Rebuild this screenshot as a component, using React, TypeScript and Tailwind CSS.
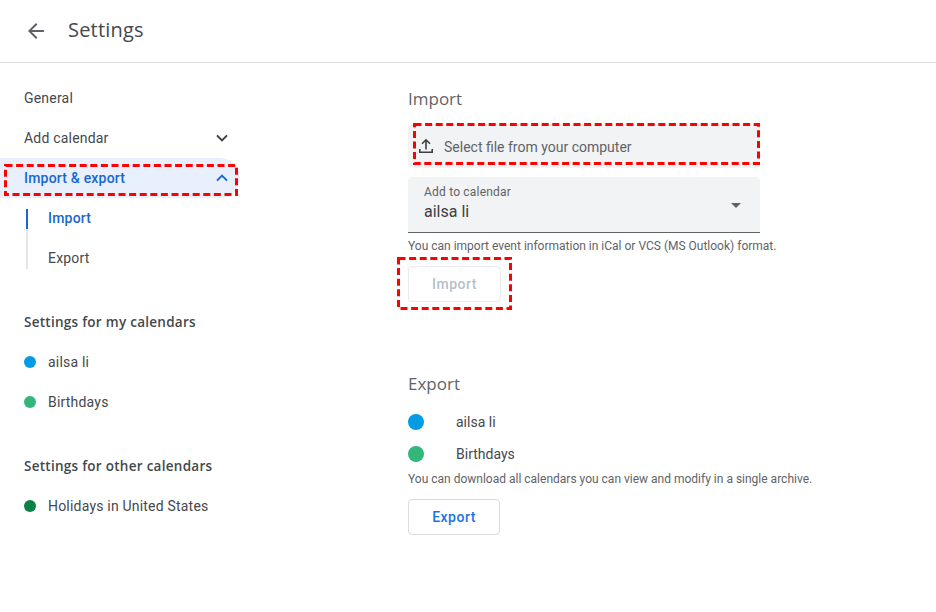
import React from "react";

const F = { fontFamily: "Roboto, sans-serif" };
const T = { fontFamily: "'Open Sans', sans-serif" };

function Row({ children, active }: { children: React.ReactNode; active?: boolean }) {
  return (
    <div className={`h-10 flex items-center pl-6 pr-[6px] text-sm tracking-[0.2px] rounded-r-[20px] ${active ? "bg-[#e8f0fe] text-[#1967d2] font-medium" : "text-[#45484c]"}`}>
      {children}
    </div>
  );
}

function Chevron({ up, color }: { up?: boolean; color: string }) {
  return (
    <svg className="ml-auto" width="24" height="24" viewBox="0 0 24 24" fill="none" stroke={color} strokeWidth="2">
      {up ? <path d="M7 14.6l5-5 5 5" /> : <path d="M7 9.4l5 5 5-5" />}
    </svg>
  );
}

function CalRow({ name, color }: { name: string; color: string }) {
  return (
    <Row>
      <span className="w-3 h-3 rounded-full mr-3" style={{ backgroundColor: color }} />
      {name}
    </Row>
  );
}

function Heading({ children }: { children: React.ReactNode }) {
  return (
    <div className="h-10 flex items-center pl-6 text-[13.5px] font-semibold tracking-[0.27px] text-[#45484c]" style={T}>
      {children}
    </div>
  );
}

function ExportCal({ name, color }: { name: string; color: string }) {
  return (
    <div className="h-8 flex items-center text-sm text-[#45484c]">
      <span className="w-4 h-4 rounded-full mr-8" style={{ backgroundColor: color }} />
      {name}
    </div>
  );
}

function Dash({ x, y, w, h }: { x: number; y: number; w: number; h: number }) {
  return <rect x={x} y={y} width={w} height={h} fill="none" stroke="#ff0000" strokeWidth="3" strokeDasharray="7 3.6" />;
}

export default function App() {
  return (
    <div className="relative w-[936px] h-[612px] bg-white overflow-hidden" style={F}>
      <header className="h-[63px] border-b border-[#dadce0] flex items-center pl-6">
        <svg width="24" height="24" viewBox="0 0 24 24" fill="#5f6368">
          <path d="M20 11H7.83l5.59-5.59L12 4l-8 8 8 8 1.41-1.41L7.83 13H20v-2z" />
        </svg>
        <span className="ml-5 mb-[2px] text-[20px] tracking-[0.2px] text-[#45484c]" style={T}>Settings</span>
      </header>
      <div className="flex">
        <nav className="w-[240px] pt-[15px] shrink-0">
          <Row>General</Row>
          <Row>Add calendar<Chevron color="#3c4043" /></Row>
          <Row active>Import &amp; export<Chevron up color="#1967d2" /></Row>
          <div className="flex ml-[26px]">
            <div className="w-[2px] mt-[11px] h-[60px] bg-[#e3e5e8]">
              <div className="h-5 bg-[#1967d2]" />
            </div>
            <div className="pl-5 text-sm tracking-[0.2px]">
              <div className="h-10 flex items-center font-medium text-[#1967d2]">Import</div>
              <div className="h-10 flex items-center text-[#45484c]">Export</div>
            </div>
          </div>
          <div className="mt-6">
            <Heading>Settings for my calendars</Heading>
            <CalRow name="ailsa li" color="#039be5" />
            <CalRow name="Birthdays" color="#33b679" />
          </div>
          <div className="mt-6">
            <Heading>Settings for other calendars</Heading>
            <CalRow name="Holidays in United States" color="#0b8043" />
          </div>
        </nav>
        <main className="ml-[168px] w-[352px] pt-6">
          <h2 className="h-6 leading-6 text-[17px] text-[#5f6368]" style={T}>Import</h2>
          <div className="mt-[13px] h-[44px] bg-[#f1f3f4] rounded flex items-center pl-2 text-sm text-[#3c4043]">
            <svg width="20" height="20" viewBox="0 0 20 20" fill="none" stroke="#3c4043" strokeWidth="1.6">
              <path d="M10 13.5V4.2M6 7.8l4-4 4 4" />
              <path d="M3.8 13v3.2h12.4V13" />
            </svg>
            <span className="ml-2 pt-[2px] text-[#5f6368]">Select file from your computer</span>
          </div>
          <div className="mt-[9px] h-[56px] bg-[#f1f3f4] rounded-t border-b border-[#5f6368] pl-4 pr-3 flex items-center">
            <div className="flex-1 pb-[1px]">
              <div className="text-xs leading-4 tracking-[0.2px] text-[#5f6368]">Add to calendar</div>
              <div className="text-base leading-6 text-[#3c4043]">ailsa li</div>
            </div>
            <svg width="24" height="24" viewBox="0 0 24 24" fill="#5f6368"><path d="M7 10l5 5 5-5z" /></svg>
          </div>
          <p className="mt-[5px] text-xs leading-4 text-[#5f6368] whitespace-nowrap">You can import event information in iCal or VCS (MS Outlook) format.</p>
          <button className="mt-[12px] w-[93px] h-[36px] rounded border border-[#e8eaed] text-sm tracking-[0.5px] text-[#b5bfcb] font-medium flex items-center justify-center">Import</button>
          <h2 className="mt-[70px] h-6 leading-6 text-[17px] text-[#5f6368]" style={T}>Export</h2>
          <div className="mt-[10px]">
            <ExportCal name="ailsa li" color="#039be5" />
            <ExportCal name="Birthdays" color="#33b679" />
          </div>
          <p className="mt-[1px] text-xs leading-4 text-[#5f6368] whitespace-nowrap">You can download all calendars you can view and modify in a single archive.</p>
          <button className="mt-[12px] w-[92px] h-[36px] rounded border border-[#dadce0] text-sm tracking-[0.5px] text-[#1a73e8] font-medium flex items-center justify-center">Export</button>
        </main>
      </div>
      <svg className="absolute left-0 top-0 pointer-events-none" width="936" height="612">
        <Dash x={5.5} y={165.5} w={231} h={29} />
        <Dash x={414.5} y={124.5} w={344} h={39} />
        <Dash x={398.5} y={258.5} w={112} h={50} />
      </svg>
    </div>
  );
}
